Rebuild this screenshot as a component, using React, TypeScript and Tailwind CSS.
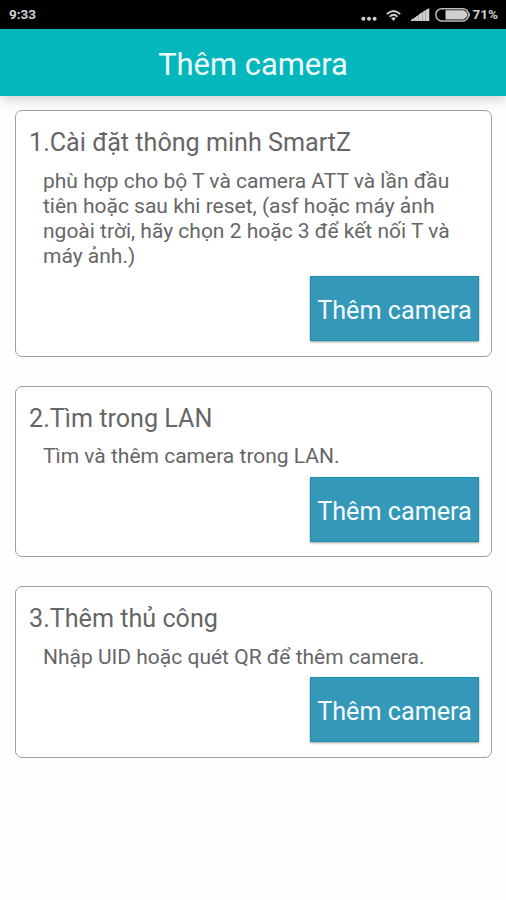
import React from "react";

type Method = { title: string; lines: string[] };

const methods: Method[] = [
  {
    title: "1.Cài đặt thông minh SmartZ",
    lines: [
      "phù hợp cho bộ T và camera ATT và lần đầu",
      "tiên hoặc sau khi reset, (asf hoặc máy ảnh",
      "ngoài trời, hãy chọn 2 hoặc 3 để kết nối T và",
      "máy ảnh.)",
    ],
  },
  { title: "2.Tìm trong LAN", lines: ["Tìm và thêm camera trong LAN."] },
  { title: "3.Thêm thủ công", lines: ["Nhập UID hoặc quét QR để thêm camera."] },
];

function StatusBar() {
  return (
    <div className="flex h-[29px] items-center justify-between bg-black pl-[9px] pr-[8px] text-[13.5px] leading-[29px] font-bold text-[#d0d0d0]">
      <span>9:33</span>
      <div className="flex h-[29px] items-center">
        <svg width="110" height="29" viewBox="361 0 110 29" fill="#cfcfcf">
          <circle cx="363.4" cy="18.8" r="2" />
          <circle cx="369" cy="18.8" r="2" />
          <circle cx="374.6" cy="18.8" r="2" />
          <g fill="none" stroke="#cfcfcf" strokeWidth="1.9">
            <path d="M386.8 14.1Q393.5 7.7 400.2 14.1" />
            <path d="M389.6 16.7Q393.5 13 397.4 16.7" />
          </g>
          <path d="M391.2 18.3Q393.5 16.4 395.8 18.3L393.5 21Z" />
          <path d="M411 21V20L429.2 8.2V21Z" fill="#8d8d8d" />
          <path d="M411 21V20L414.5 17.8V21ZM415 21V17.4L418.3 15V21ZM418.8 21V14.6L422 12.3V21ZM422.5 21V12L425.5 10V21ZM426 21V9.7L429.2 8.2V21Z" />
          <rect x="435.9" y="8.7" width="32.6" height="12.2" rx="5.8" fill="none" stroke="#bdbdbd" strokeWidth="1.5" />
          <path d="M445.5 10.2H463.3Q467.2 11.4 467.2 14.8T463.3 19.4H445.5Z" />
          <path d="M469 12.5Q471 14.8 469 17Z" />
        </svg>
        <span className="ml-[2px]">71%</span>
      </div>
    </div>
  );
}

function MethodCard({ title, lines }: Method) {
  return (
    <section className="flex flex-col rounded-[7px] border border-[#a0a0a0] bg-white pt-[15px] pr-[12px] pb-[14.7px] pl-[13px]">
      <h2 className="h-[32px] text-[25.15px] leading-[34.6px] whitespace-nowrap text-[#666666]">{title}</h2>
      <div className="mt-[10.6px] mb-[7.4px] ml-[14px] text-[21px] leading-[25px] whitespace-nowrap text-[#666666]">
        {lines.map((line) => (
          <p key={line}>{line}</p>
        ))}
      </div>
      <button className="h-[65px] w-[169px] self-end border border-[#188eb1] bg-[#3598b9] text-[25.2px] leading-[67px] whitespace-nowrap text-[#f4fcff] shadow-[0_1px_2px_rgba(0,0,0,0.4)]">
        Thêm camera
      </button>
    </section>
  );
}

export default function App() {
  return (
    <div className="flex h-[900px] w-[506px] flex-col overflow-hidden bg-[#fdfdfd] font-['Roboto','Noto_Sans',sans-serif]">
      <StatusBar />
      <header className="z-10 h-[67px] shrink-0 bg-[#03b7bd] text-center text-[30.9px] leading-[71px] text-[#effcfd] shadow-[0_3px_12px_rgba(0,0,0,0.2)]">
        Thêm camera
      </header>
      <main className="flex flex-col gap-[29px] bg-[#fefefe] pt-[14px] pr-[14px] pb-[13px] pl-[15px]">
        {methods.map((m) => (
          <MethodCard key={m.title} {...m} />
        ))}
      </main>
    </div>
  );
}
